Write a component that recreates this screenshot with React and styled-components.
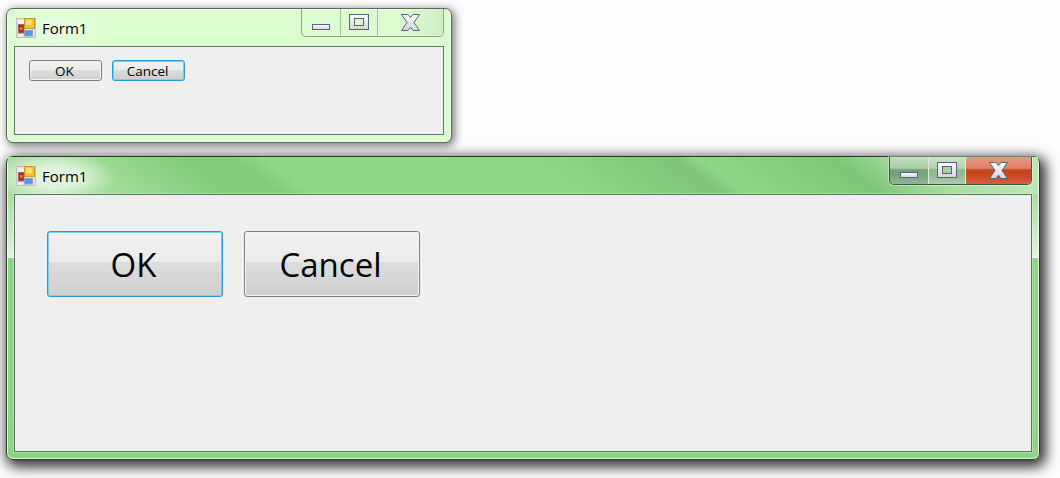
import React, { useId } from 'react'
import styled, { createGlobalStyle } from 'styled-components'

const FormIcon = () => (
  <svg width="20" height="20" viewBox="0 0 20 20">
    <rect x="0.5" y="0.5" width="19" height="19" fill="#dfe2da" stroke="#bfc3b9" />
    <rect x="2" y="2" width="6" height="4" fill="#f0f2ec" />
    <rect x="2.500" y="6.500" width="5.500" height="8.500" fill="#b3261c" stroke="#a06a5c" />
    <rect x="4" y="9" width="2.500" height="3" fill="#e8756a" />
    <rect x="8.500" y="0.500" width="10" height="10" fill="#f7c531" stroke="#c49a30" />
    <rect x="10" y="2" width="6" height="5" fill="#fbdc7a" />
    <rect x="8.500" y="12.500" width="8" height="5.500" fill="#4f96e8" stroke="#8aa8cc" />
    <rect x="2" y="16.500" width="5" height="2" fill="#f0f2ec" />
  </svg>
)

const IconFill = ({ id }) => (
  <linearGradient id={id} x1="0" y1="0" x2="0" y2="1">
    <stop offset="0" stopColor="#fbfbfd" />
    <stop offset="1" stopColor="#d4d6de" />
  </linearGradient>
)

const MinimizeIcon = () => {
  const id = useId()
  return (
    <svg width="18" height="6" viewBox="0 0 18 6">
      <IconFill id={id} />
      <rect x="0.500" y="0.500" width="17" height="5" fill={`url(#${id})`} stroke="#5a6274" />
    </svg>
  )
}

const MaximizeIcon = ({ pane }) => {
  const id = useId()
  return (
    <svg width="20" height="16" viewBox="0 0 20 16">
      <IconFill id={id} />
      <rect x="0.500" y="0.500" width="19" height="15" fill={`url(#${id})`} stroke="#5a6274" />
      <rect x="5.500" y="4.500" width="9" height="7" fill={pane} stroke="#5a6274" />
    </svg>
  )
}

const CloseIcon = () => {
  const id = useId()
  return (
    <svg width="19" height="17" viewBox="0 0 19 17">
      <IconFill id={id} />
      <path
        d="M0.500 0.500h6.500l2.500 3 2.500-3h6.500L13 8.500l5.500 8H12l-2.500-3.300-2.500 3.300H0.500l5.500-8z"
        fill={`url(#${id})`}
        stroke="#5a6274"
      />
    </svg>
  )
}

const App = () => (
  <>
    <GlobalStyle />
    <Desktop>
      <Window>
        <TitleBar>
          <Caption>
            <FormIcon />
            <TitleText>Form1</TitleText>
          </Caption>
          <Controls>
            <MinButton><MinimizeIcon /></MinButton>
            <MaxButton><MaximizeIcon pane="#dcf8d0" /></MaxButton>
            <CloseButton><CloseIcon /></CloseButton>
          </Controls>
        </TitleBar>
        <Client>
          <ButtonRow>
            <FormButton>OK</FormButton>
            <FormButton $focused>Cancel</FormButton>
          </ButtonRow>
        </Client>
      </Window>
      <Window $active>
        <TitleBar $active>
          <Caption>
            <FormIcon />
            <TitleText>Form1</TitleText>
          </Caption>
          <Controls $active>
            <MinButton $active><MinimizeIcon /></MinButton>
            <MaxButton $active><MaximizeIcon pane="#a9d0a2" /></MaxButton>
            <CloseButton $active><CloseIcon /></CloseButton>
          </Controls>
        </TitleBar>
        <Client $active>
          <ButtonRow $active>
            <FormButton $active $focused>OK</FormButton>
            <FormButton $active>Cancel</FormButton>
          </ButtonRow>
        </Client>
      </Window>
    </Desktop>
  </>
)

export default App

// Styled components

const GlobalStyle = createGlobalStyle`
  html, body {
    margin: 0;
    height: 100%;
    background: #fdfdfd;
    overflow: hidden;
  }
`

const Desktop = styled.div`
  display: flex;
  flex-direction: column;
  align-items: flex-start;
  gap: 13px;
  padding: 8px 0 0 6px;
  font-family: "Open Sans", "Liberation Sans", sans-serif;
`

const Window = styled.div`
  box-sizing: border-box;
  display: flex;
  flex-direction: column;
  width: ${p => (p.$active ? '1034px' : '446px')};
  height: ${p => (p.$active ? '304px' : '135px')};
  padding: 0 7px 7px;
  border-radius: 7px;
  border: 1px solid ${p => (p.$active ? '#2c3a2c' : '#5d6b5f')};
  box-shadow: ${p =>
    p.$active
      ? 'inset 0 0 0 1px rgba(255,255,255,0.8), 3px 4px 13px 3px rgba(0,0,0,0.8)'
      : 'inset 0 0 0 1px rgba(255,255,255,0.5), 2px 2px 8px 1px rgba(0,0,0,0.5)'};
  background: ${p =>
    p.$active
      ? `linear-gradient(180deg, transparent 0, transparent 101px, #8fd589 101px, #8fd589 260px, #8bd385 100%),
         linear-gradient(180deg, #a8dea0 0, #a8dea0 38px, #def3da 98px, #eef9ec 101px)`
      : '#dbfdd0'};
`

const TitleBar = styled.div`
  display: flex;
  justify-content: space-between;
  align-items: flex-start;
  height: 37px;
  flex: none;
  margin: 0 -6px;
  padding: 0 6px;
  background: ${p =>
    p.$active
      ? `radial-gradient(ellipse 62px 26px at 46px 20px, rgba(255,255,255,0.65) 40%, rgba(255,255,255,0) 100%),
         linear-gradient(36deg,
           #a9e0a1 0, #a0dc98 70px, #82cc7c 133px, #82cc7c 160px, #90d788 178px,
           #90d788 340px, #7fc47a 421px, #90d788 434px, #7fc67a 514px,
           #a2dc9a 550px, #bce7b4 604px, #bce7b4 100%)`
      : `radial-gradient(ellipse 60px 24px at 46px 20px, rgba(255,255,255,0.3) 30%, rgba(255,255,255,0) 100%)`};
`

const Caption = styled.div`
  display: flex;
  align-items: center;
  gap: 6px;
  height: 37px;
  padding-left: 2px;
`

const TitleText = styled.span`
  font-size: 15px;
  color: #000;
`

const Controls = styled.div`
  display: flex;
  height: 27px;
  border: 1px solid ${p => (p.$active ? '#3f5a44' : '#8fa58f')};
  border-top: 0;
  border-radius: 0 0 5px 5px;
  overflow: hidden;
  box-shadow: ${p => (p.$active ? '0 0 0 1px rgba(255,255,255,0.35)' : 'none')};
`

const ControlButton = styled.div`
  box-sizing: border-box;
  display: flex;
  justify-content: center;
  height: 100%;
  padding-top: 5px;
`

const MinButton = styled(ControlButton)`
  width: 39px;
  padding-top: 15px;
  border-right: 1px solid ${p => (p.$active ? '#dfeadf' : '#a6bca6')};
  background: ${p =>
    p.$active
      ? 'linear-gradient(180deg, #c6e0c0 0, #a8cca2 42%, #739e76 48%, #7aa47c 70%, #92b690 100%)'
      : 'transparent'};
`

const MaxButton = styled(ControlButton)`
  width: 37px;
  border-right: 1px solid ${p => (p.$active ? '#dfeadf' : '#a6bca6')};
  background: ${p =>
    p.$active
      ? 'linear-gradient(180deg, #cce5c6 0, #b0d4aa 42%, #8eb68c 48%, #94bc92 70%, #abcea7 100%)'
      : 'transparent'};
`

const CloseButton = styled(ControlButton)`
  width: 65px;
  background: ${p =>
    p.$active
      ? 'linear-gradient(180deg, #ea9a84 0, #dc7f64 42%, #c6431d 48%, #c8481f 68%, #d6623f 100%)'
      : 'linear-gradient(90deg, transparent 40%, #cfeec4 100%)'};
`

const Client = styled.div`
  flex: 1;
  min-height: 0;
  background: #efefef;
  border: 1px solid ${p => (p.$active ? '#55795a' : '#66766a')};
  box-shadow: ${p => (p.$active ? '0 0 0 1px rgba(255,255,255,0.3)' : 'none')};
`

const ButtonRow = styled.div`
  display: flex;
  gap: ${p => (p.$active ? '21px' : '10px')};
  padding: ${p => (p.$active ? '36px 0 0 32px' : '13px 0 0 14px')};
`

const FormButton = styled.div`
  box-sizing: border-box;
  display: flex;
  align-items: center;
  justify-content: center;
  width: ${p => (p.$active ? '176px' : '73px')};
  height: ${p => (p.$active ? '66px' : '21px')};
  padding-right: ${p => (p.$active ? '3px' : '2px')};
  border-radius: 3px;
  border: 1px solid ${p => (p.$focused ? '#2a9ad4' : '#7f7f7f')};
  box-shadow: inset 0 0 0 1px ${p => (p.$focused ? '#7fcbea' : '#f5f5f5')};
  background: linear-gradient(180deg, #f2f2f2 0, #ebebeb 47%, #dddddd 47%, #cfcfcf 100%);
  color: #000;
  font-size: ${p => (p.$active ? '33px' : '13.500px')};
`
